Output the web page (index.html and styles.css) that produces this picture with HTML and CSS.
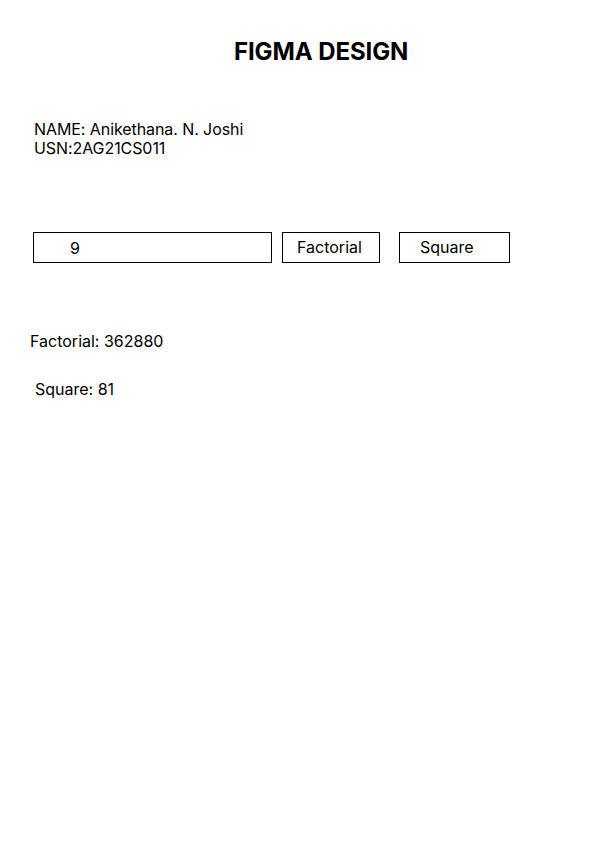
FILE: index.html
```html
<!DOCTYPE html>
<html>
<head>
<meta charset="utf-8">
<link rel="stylesheet" href="styles.css">
</head>
<body>
<div class="page">
  <h1 class="title">FIGMA DESIGN</h1>
  <div class="info">
    <div>NAME: Anikethana. N. Joshi</div>
    <div>USN:2AG21CS011</div>
  </div>
  <div class="controls">
    <div class="input"><span>9</span></div>
    <div class="btn btn-fact">Factorial</div>
    <div class="btn btn-sq">Square</div>
  </div>
  <div class="result result-fact">Factorial: 362880</div>
  <div class="result result-sq">Square: 81</div>
</div>
</body>
</html>
```
FILE: styles.css
```css
html, body {
  margin: 0;
  padding: 0;
  background: #fff;
}
.page {
  width: 595px;
  height: 842px;
  font-family: Inter, "Liberation Sans", sans-serif;
  color: #000;
  display: flex;
  flex-direction: column;
}
.title {
  margin: 37px 0 0 234px;
  font-size: 24px;
  line-height: 29px;
  font-weight: 700;
  letter-spacing: -0.1px;
}
.info {
  margin: 54px 0 0 34px;
  font-size: 16px;
  line-height: 19px;
  letter-spacing: -0.08px;
}
.controls {
  margin: 74px 0 0 33px;
  display: flex;
  font-size: 16px;
  line-height: 19px;
}
.input {
  box-sizing: border-box;
  width: 239px;
  height: 31px;
  border: 1px solid #000;
  padding: 6px 0 0 36px;
}
.btn {
  box-sizing: border-box;
  height: 31px;
  border: 1px solid #000;
  padding-top: 5px;
}
.btn-fact {
  margin-left: 10px;
  width: 98px;
  padding-left: 14px;
}
.btn-sq {
  margin-left: 19px;
  width: 111px;
  padding-left: 20px;
}
.result {
  font-size: 16px;
  line-height: 19px;
}
.result-fact {
  margin: 69px 0 0 30px;
}
.result-sq {
  margin: 29px 0 0 35px;
}
```
